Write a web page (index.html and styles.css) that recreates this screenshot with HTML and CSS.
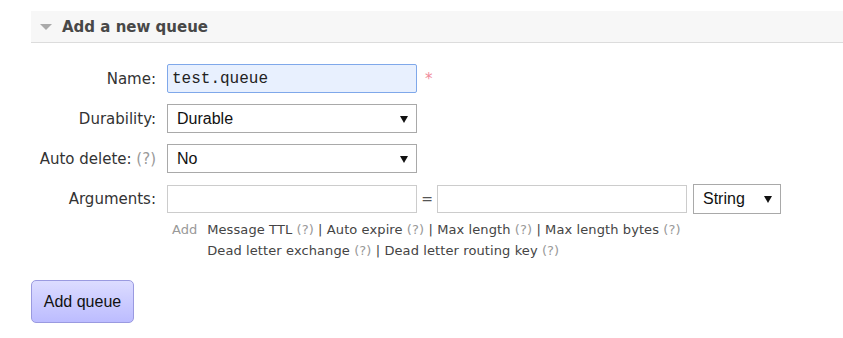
FILE: index.html
```html
<!DOCTYPE html>
<html>
<head>
<title>Add a new queue</title>
<link rel="stylesheet" href="styles.css">
</head>
<body>
<div class="section">
  <div class="section-header">
    <span class="arrow"></span>
    <h2>Add a new queue</h2>
  </div>
  <div class="form">
    <label class="label">Name:</label>
    <div class="field">
      <input type="text" class="text name" value="test.queue">
      <span class="mand">*</span>
    </div>

    <label class="label">Durability:</label>
    <div class="field">
      <span class="select wide"><select><option>Durable</option><option>Transient</option></select></span>
    </div>

    <label class="label">Auto delete: <span class="help">(?)</span></label>
    <div class="field">
      <span class="select wide"><select><option>No</option><option>Yes</option></select></span>
    </div>

    <label class="label">Arguments:</label>
    <div class="field">
      <input type="text" class="text">
      <span class="equals">=</span>
      <input type="text" class="text">
      <span class="select small"><select><option>String</option><option>Number</option><option>Boolean</option></select></span>
    </div>

    <div></div>
    <div class="args-help">
      <span class="add">Add</span>
      <div class="links">
        <div>Message TTL <span class="help">(?)</span> | Auto expire <span class="help">(?)</span> | Max length <span class="help">(?)</span> | Max length bytes <span class="help">(?)</span></div>
        <div>Dead letter exchange <span class="help">(?)</span> | Dead letter routing key <span class="help">(?)</span></div>
      </div>
    </div>
  </div>
  <button class="submit">Add queue</button>
</div>
</body>
</html>
```
FILE: styles.css
```css
body {
  margin: 0;
  font-family: "DejaVu Sans", Verdana, sans-serif;
  color: #484848;
  background: #fff;
}

.section {
  padding: 11px 0 0 31px;
}

.section-header {
  display: flex;
  align-items: center;
  height: 31px;
  background: #f7f7f7;
  border-bottom: 1px solid #dcdcdc;
}

.arrow {
  width: 0;
  height: 0;
  margin: 0 10px 0 9px;
  border-left: 6px solid transparent;
  border-right: 6px solid transparent;
  border-top: 6px solid #aaa;
}

h2 {
  margin: 0;
  font-size: 15px;
  font-weight: bold;
  color: #484848;
}

.form {
  display: grid;
  grid-template-columns: 125px 1fr;
  column-gap: 11px;
  row-gap: 11px;
  margin-top: 21px;
  align-items: center;
}

.label {
  text-align: right;
  font-size: 15px;
  color: #333;
  white-space: nowrap;
}

.help {
  color: #999;
}

.field {
  display: flex;
  align-items: center;
  height: 29px;
}

.text {
  box-sizing: border-box;
  width: 250px;
  height: 28px;
  border: 1px solid #ccc;
  padding: 0 4px;
  font-family: "Liberation Mono", "Courier New", monospace;
  font-size: 16px;
  color: #222;
  outline: none;
}

.name {
  height: 29px;
  background: #e8f0fe;
  border: 1px solid #7fa8ea;
  border-radius: 2px;
}

.mand {
  margin-left: 8px;
  color: #f08a9a;
  font-size: 15px;
  align-self: flex-start;
  margin-top: 6px;
}

.select {
  position: relative;
  display: inline-block;
}

.select select {
  appearance: none;
  -webkit-appearance: none;
  box-sizing: border-box;
  height: 29px;
  border: 1px solid #a9a9a9;
  background: #fff;
  padding: 0 0 0 9px;
  font-family: "Liberation Sans", Arial, sans-serif;
  font-size: 16px;
  color: #111;
  border-radius: 0;
}

.select::after {
  content: "";
  position: absolute;
  right: 9px;
  top: 12px;
  border-left: 4px solid transparent;
  border-right: 4px solid transparent;
  border-top: 7px solid #111;
  pointer-events: none;
}

.wide select {
  width: 250px;
}

.small {
  margin-left: 6px;
}

.small select {
  width: 88px;
  height: 30px;
}

.equals {
  width: 20px;
  text-align: center;
  font-size: 14px;
  color: #555;
}

.args-help {
  display: flex;
  font-size: 13px;
  line-height: 21px;
  margin-top: -5px;
  color: #444;
}

.links {
  letter-spacing: 0.1px;
}

.add {
  color: #999;
  margin: 0 10px 0 5px;
}

.submit {
  margin-top: 19px;
  width: 103px;
  height: 43px;
  border: 1px solid #9a9ae0;
  border-radius: 5px;
  background: linear-gradient(#dcdcff, #bcbcff);
  font-family: "Liberation Sans", Arial, sans-serif;
  font-size: 16px;
  color: #111;
  padding: 0;
}
```
